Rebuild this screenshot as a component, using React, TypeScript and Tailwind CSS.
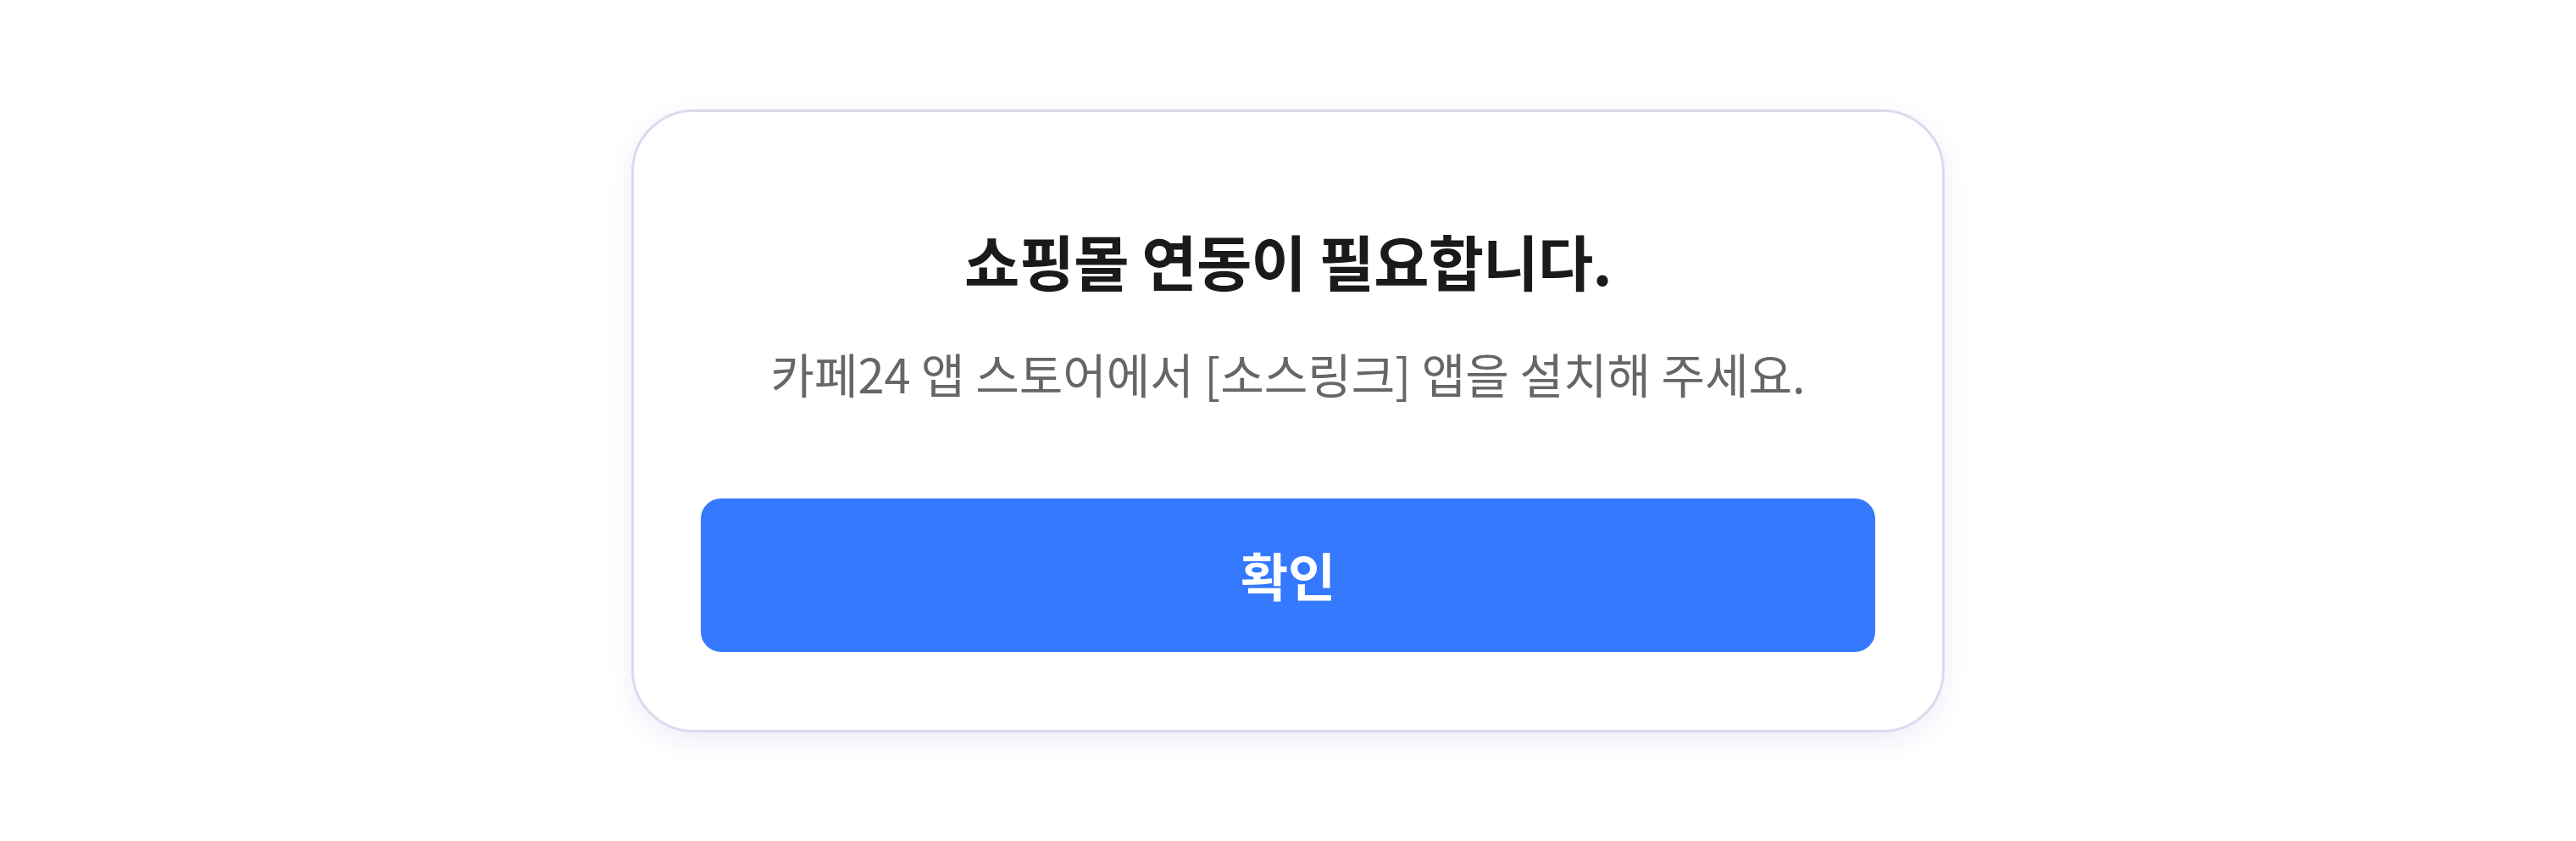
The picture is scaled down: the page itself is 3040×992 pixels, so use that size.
import React from "react";

export default function App() {
  return (
    <div
      className="min-h-screen w-full bg-white flex items-center justify-center"
      style={{ fontFamily: '"Noto Sans CJK KR", "Noto Sans", sans-serif' }}
    >
      <div className="w-[1550px] rounded-[74px] border-[3px] border-[#dadaef] bg-white px-[79px] pt-[134px] pb-[92px] shadow-[0_10px_28px_rgba(130,130,210,0.14)] flex flex-col items-center">
        <h1 className="text-[71px] leading-[80px] font-bold text-[#1a1a1a] tracking-[-0.01em]">
          쇼핑몰 연동이 필요합니다.
        </h1>
        <p className="mt-[62px] text-[56px] leading-[64px] text-[#666666]">
          카페24 앱 스토어에서 [소스링크] 앱을 설치해 주세요.
        </p>
        <button className="mt-[116px] w-full h-[181px] rounded-[24px] bg-[#3579ff] text-white text-[61px] font-bold flex items-center justify-center">
          확인
        </button>
      </div>
    </div>
  );
}
